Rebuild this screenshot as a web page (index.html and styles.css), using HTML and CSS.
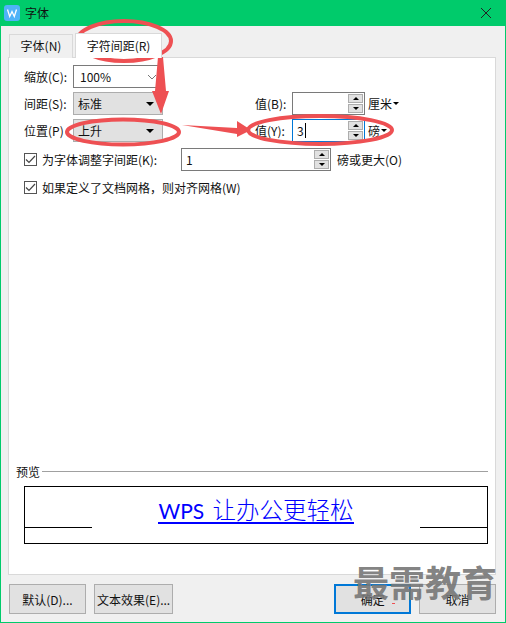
FILE: index.html
```html
<!DOCTYPE html>
<html lang="zh">
<head>
<meta charset="utf-8">
<title>字体</title>
<link rel="stylesheet" href="styles.css">
</head>
<body>
<div class="window">
  <header class="titlebar">
    <svg class="app-icon" width="16" height="16" viewBox="0 0 16 16"><rect width="16" height="16" rx="3" fill="#4fb3f8"/><path d="M3.500 4.500l2.200 7L8 6.500l2.300 5 2.200-7" fill="none" stroke="#fff" stroke-width="1.300"/></svg>
    <span class="title">字体</span>
    <svg class="close" width="12" height="12" viewBox="0 0 12 12"><path d="M1 1l10 10M11 1L1 11" stroke="#222" stroke-width="1"/></svg>
  </header>
  <div class="content">
    <nav class="tabs">
      <div class="tab">字体(N)</div>
      <div class="tab active">字符间距(R)</div>
    </nav>
    <section class="panel">
      <div class="row">
        <label class="label">缩放(C):</label>
        <div class="combo edit"><span>100%</span><svg width="10" height="6" viewBox="0 0 10 6"><path d="M1 1l4 4 4-4" fill="none" stroke="#777"/></svg></div>
      </div>
      <div class="row">
        <label class="label">间距(S):</label>
        <div class="combo"><span>标准</span><i class="caret"></i></div>
        <label class="vlabel">值(B):</label>
        <div class="spin">
          <span class="value"></span>
          <div class="spinbtns"><b class="up"></b><b class="down"></b></div>
        </div>
        <span class="unit">厘米<i class="mini-caret"></i></span>
      </div>
      <div class="row">
        <label class="label">位置(P)</label>
        <div class="combo"><span>上升</span><i class="caret"></i></div>
        <label class="vlabel">值(Y):</label>
        <div class="spin focus">
          <span class="value">3<i class="cursor"></i></span>
          <div class="spinbtns"><b class="up"></b><b class="down"></b></div>
        </div>
        <span class="unit">磅<i class="mini-caret"></i></span>
      </div>
      <div class="row kern">
        <span class="check"><svg width="11" height="9" viewBox="0 0 11 9"><path d="M1 4.500l3 3 6-6.500" fill="none" stroke="#444" stroke-width="1.200"/></svg></span>
        <label class="check-label">为字体调整字间距(K):</label>
        <div class="spin wide">
          <span class="value">1</span>
          <div class="spinbtns"><b class="up"></b><b class="down"></b></div>
        </div>
        <span class="after">磅或更大(O)</span>
      </div>
      <div class="row grid-row">
        <span class="check"><svg width="11" height="9" viewBox="0 0 11 9"><path d="M1 4.500l3 3 6-6.500" fill="none" stroke="#444" stroke-width="1.200"/></svg></span>
        <label class="check-label">如果定义了文档网格，则对齐网格(W)</label>
      </div>
      <div class="preview">
        <div class="preview-head"><span>预览</span><i></i></div>
        <div class="preview-box">
          <i class="rule left"></i>
          <span class="sample"><span class="latin">WPS</span> 让办公更轻松</span>
          <i class="rule right"></i>
        </div>
      </div>
    </section>
    <footer class="buttons">
      <button class="btn first">默认(D)...</button>
      <button class="btn second">文本效果(E)...</button>
      <button class="btn ok">确定</button>
      <button class="btn">取消</button>
    </footer>
  </div>
  <svg class="marks" width="506" height="623" viewBox="0 0 506 623">
    <g fill="none" stroke="#ee5053" stroke-width="4">
      <ellipse cx="124" cy="41" rx="47" ry="20"/>
      <ellipse cx="123" cy="132" rx="56" ry="12.500"/>
      <ellipse cx="320" cy="130" rx="72" ry="14"/>
    </g>
    <g fill="#ee5053">
      <path d="M158 57h5l3 34h3l-8 23-9-23h3z"/>
      <path d="M182 125l55 3v-7l14 9-14 7v-3z"/>
      <rect x="392" y="603" width="3" height="1"/>
    </g>
  </svg>
  <div class="watermark">最需教育</div>
</div>
</body>
</html>
```

FILE: styles.css
```css
* { box-sizing: border-box; }
html, body { margin: 0; padding: 0; }
body {
  width: 506px;
  height: 623px;
  overflow: hidden;
  font-family: "Noto Sans CJK SC", "Liberation Sans", sans-serif;
  font-size: 12px;
  color: #111;
}
.window {
  position: relative;
  width: 506px;
  height: 623px;
  display: flex;
  flex-direction: column;
  background: #f0f0f0;
  border: 1px solid #00cb6b;
  border-top: 0;
}
.titlebar {
  height: 26px;
  flex: none;
  display: flex;
  align-items: center;
  margin: 0 -1px;
  padding: 0 14px 0 4px;
  background: #00cb6b;
}
.title { margin-left: 5px; line-height: 26px; }
.close { margin-left: auto; }
.content {
  flex: 1;
  display: flex;
  flex-direction: column;
  padding: 8px 9px 8px 7px;
}
.tabs { display: flex; height: 24px; align-items: flex-end; padding-left: 1px; position: relative; z-index: 1; margin-bottom: -1px; }
.tab {
  width: 64px;
  height: 24px;
  line-height: 22px;
  text-align: center;
  background: #f0f0f0;
  border: 1px solid #d9d9d9;
  border-bottom: 0;
}
.tab.active {
  width: 87px;
  height: 25px;
  line-height: 24px;
  margin-left: 2px;
  background: #fff;
}
.panel {
  height: 518px;
  flex: none;
  display: flex;
  flex-direction: column;
  padding: 7px 7px 0 15px;
  background: #fff;
  border: 1px solid #d9d9d9;
}
.row { display: flex; align-items: center; height: 23px; margin-bottom: 4px; }
.label { width: 49px; flex: none; white-space: nowrap; }
.combo {
  width: 90px;
  height: 23px;
  flex: none;
  display: flex;
  align-items: center;
  justify-content: space-between;
  padding: 0 5px 0 4px;
  background: #e1e1e1;
  border: 1px solid #adadad;
}
.combo.edit { background: #fff; border-color: #7a7a7a; padding-left: 6px; }
.caret { width: 0; height: 0; border: 4px solid transparent; border-top: 4px solid #000; border-bottom: 0; margin-right: 3px; }
.vlabel { margin-left: 92px; width: 37px; flex: none; white-space: nowrap; }
.spin {
  width: 73px;
  height: 23px;
  flex: none;
  display: flex;
  align-items: center;
  justify-content: space-between;
  padding: 0 1px 0 4px;
  background: #fff;
  border: 1px solid #7a7a7a;
}
.spin.focus { border-color: #0078d7; }
.spin.wide { width: 150px; }
.value { display: flex; align-items: center; height: 17px; }
.cursor { width: 1px; height: 15px; background: #000; margin-left: 1px; }
.spinbtns { width: 15px; height: 19px; display: flex; flex-direction: column; gap: 1px; }
.spinbtns b { flex: 1; background: #e1e1e1; border: 1px solid #adadad; display: flex; align-items: center; justify-content: center; }
.spinbtns b::after { content: ""; width: 0; height: 0; border-left: 3.500px solid transparent; border-right: 3.500px solid transparent; }
.up::after { border-bottom: 3.500px solid #000; }
.down::after { border-top: 3.500px solid #000; }
.unit { margin-left: 3px; white-space: nowrap; display: flex; align-items: center; }
.mini-caret { width: 0; height: 0; border: 3px solid transparent; border-top: 3px solid #000; border-bottom: 0; margin-left: 1px; }
.kern { margin-top: 2px; margin-bottom: 0; }
.check {
  width: 13px;
  height: 13px;
  flex: none;
  display: flex;
  align-items: center;
  justify-content: center;
  border: 1px solid #555;
  background: #fff;
}
.check-label { margin-left: 5px; white-space: nowrap; }
.kern .check-label { width: 139px; flex: none; }
.after { margin-left: 6px; white-space: nowrap; }
.grid-row { margin-top: 5px; }
.preview { margin-top: auto; margin-bottom: 30px; margin-left: -8px; }
.preview-head { display: flex; align-items: center; height: 16px; }
.preview-head i { flex: 1; height: 1px; background: #a0a0a0; margin-left: 2px; }
.preview-box {
  position: relative;
  display: flex;
  justify-content: space-between;
  margin: 7px 0 0 8px;
  height: 58px;
  border: 1px solid #000;
}
.rule { width: 67px; height: 1px; background: #000; margin-top: 40px; }
.sample {
  font-size: 23.500px;
  line-height: 47px;
  height: 37px;
  color: #0000ff;
  border-bottom: 2px solid #0000ff;
  white-space: nowrap;
  display: block;
  word-spacing: 2px;
  font-family: Lato, "Noto Sans CJK SC", sans-serif;
  font-weight: 300;
}
.latin { font-weight: 400; font-size: 21px; }
.buttons { display: flex; padding-top: 9px; }
.btn {
  height: 30px;
  width: 77px;
  padding: 0;
  font: inherit;
  color: #111;
  background: #e1e1e1;
  border: 1px solid #adadad;
  white-space: nowrap;
}
.first { margin-left: 1px; }
.second { width: 80px; margin-left: 8px; margin-right: 161px; }
.ok { border: 2px solid #0078d7; margin-right: 8px; }
.marks { position: absolute; left: -1px; top: 0; pointer-events: none; }
.watermark {
  position: absolute;
  left: 352px;
  top: 558px;
  font-size: 36px;
  line-height: 46px;
  font-weight: 700;
  color: rgba(120,120,120,.93);
  white-space: nowrap;
}
```
